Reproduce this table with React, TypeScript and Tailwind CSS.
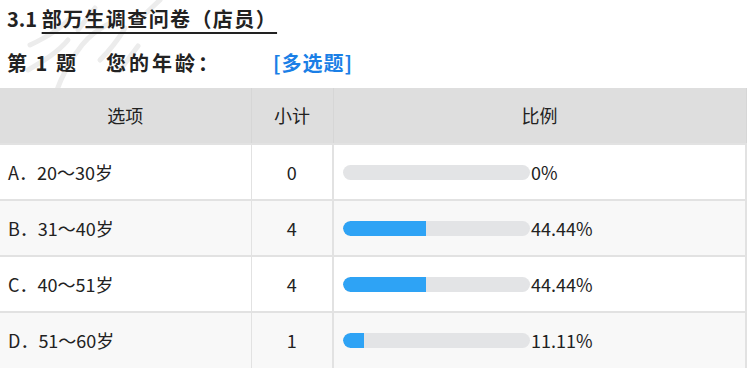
import React from "react";

interface Row {
  label: string;
  count: number;
  percent: number;
  text: string;
}

const rows: Row[] = [
  { label: "A．20～30岁", count: 0, percent: 0, text: "0%" },
  { label: "B．31～40岁", count: 4, percent: 44.44, text: "44.44%" },
  { label: "C．40～51岁", count: 4, percent: 44.44, text: "44.44%" },
  { label: "D．51～60岁", count: 1, percent: 11.11, text: "11.11%" },
];

const App = () => {
  return (
    <div
      className="relative w-[750px] h-[371px] bg-white text-[#222] overflow-hidden"
      style={{ fontFamily: '"Noto Sans CJK SC", "Noto Sans", sans-serif' }}
    >
      {/* faint watermark strokes */}
      <svg
        className="absolute left-0 top-0 pointer-events-none"
        width="200"
        height="95"
        viewBox="0 0 200 95"
        fill="none"
        stroke="#ececec"
        strokeWidth="5"
        strokeLinecap="round"
      >
        <path d="M30 45 C45 38 60 30 70 18" />
        <path d="M28 70 C45 60 58 52 68 40" />
        <path d="M55 95 C62 75 70 60 82 45 C90 35 100 28 112 22" />
        <path d="M78 30 L95 8" />
        <path d="M100 60 C110 50 118 40 125 28" />
        <path d="M120 70 L138 46" />
        <path d="M145 14 L160 0" />
      </svg>
      <div className="relative">
        <div className="pt-[5px] pl-[7px] h-[44px] text-[20px] font-bold leading-[28px]">
          3.1{" "}
          <span className="underline underline-offset-[5px] decoration-2 tracking-[1.4px]">
            部万生调查问卷（店员）
          </span>
        </div>
        <div className="flex items-center pl-[7px] h-[38px] text-[20px] font-bold">
          <span className="w-[99px] tracking-[2px]">第 1 题</span>
          <span className="w-[167px] tracking-[3px]">您的年龄：</span>
          <span className="text-[#1a7fe6] tracking-[1px]">[多选题]</span>
        </div>
        <table className="w-[747px] border-collapse text-[18px] mt-[6px]">
          <thead>
            <tr className="bg-[#dedede] h-[56px]">
              <th className="w-[251px] font-normal border-r border-[#d6d6d6]">选项</th>
              <th className="w-[82px] font-normal border-r border-[#d6d6d6]">小计</th>
              <th className="font-normal border-r border-[#d6d6d6]">比例</th>
            </tr>
          </thead>
          <tbody>
            {rows.map((row, i) => (
              <tr
                key={row.label}
                className={`h-[56px] border-t-2 border-[#e2e2e2] ${i % 2 === 1 ? "bg-[#f8f8f8]" : "bg-white"}`}
              >
                <td className="pl-[8px] border-r border-[#e2e2e2]">{row.label}</td>
                <td className="text-center border-r-2 border-[#e2e2e2]">{row.count}</td>
                <td className="pl-[9px] border-r-2 border-[#e2e2e2]">
                  <div className="flex items-center">
                    <div className="w-[187px] h-[15px] rounded-full bg-[#e3e4e6] overflow-hidden">
                      <div
                        className="h-full bg-[#2ea3f5] rounded-l-full"
                        style={{ width: `${row.percent}%` }}
                      />
                    </div>
                    <span className="ml-[1px]">{row.text}</span>
                  </div>
                </td>
              </tr>
            ))}
          </tbody>
        </table>
      </div>
    </div>
  );
};

export default App;
